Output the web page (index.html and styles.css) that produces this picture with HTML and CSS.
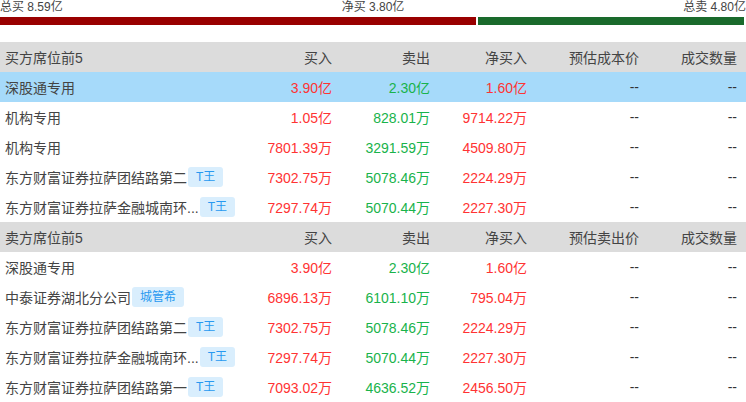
FILE: index.html
```html
<!DOCTYPE html>
<html lang="zh-CN">
<head>
<meta charset="utf-8">
<link rel="stylesheet" href="styles.css">
</head>
<body>
<div class="page">
  <div class="summary">
    <span>总买 8.59亿</span>
    <span>净买 3.80亿</span>
    <span>总卖 4.80亿</span>
  </div>
  <div class="bar">
    <div class="bar-buy"></div>
    <div class="bar-sell"></div>
  </div>

  <div class="table">
    <div class="row head">
      <div class="c name">买方席位前5</div><div class="c">买入</div><div class="c">卖出</div><div class="c">净买入</div><div class="c">预估成本价</div><div class="c">成交数量</div>
    </div>
    <div class="row hl">
      <div class="c name"><span class="nm">深股通专用</span></div><div class="c up">3.90亿</div><div class="c down">2.30亿</div><div class="c up">1.60亿</div><div class="c">--</div><div class="c">--</div>
    </div>
    <div class="row">
      <div class="c name"><span class="nm">机构专用</span></div><div class="c up">1.05亿</div><div class="c down">828.01万</div><div class="c up">9714.22万</div><div class="c">--</div><div class="c">--</div>
    </div>
    <div class="row">
      <div class="c name"><span class="nm">机构专用</span></div><div class="c up">7801.39万</div><div class="c down">3291.59万</div><div class="c up">4509.80万</div><div class="c">--</div><div class="c">--</div>
    </div>
    <div class="row">
      <div class="c name"><span class="nm">东方财富证券拉萨团结路第二</span><span class="tag">T王</span></div><div class="c up">7302.75万</div><div class="c down">5078.46万</div><div class="c up">2224.29万</div><div class="c">--</div><div class="c">--</div>
    </div>
    <div class="row">
      <div class="c name"><span class="nm" title="东方财富证券拉萨金融城南环路">东方财富证券拉萨金融城南环...</span><span class="tag">T王</span></div><div class="c up">7297.74万</div><div class="c down">5070.44万</div><div class="c up">2227.30万</div><div class="c">--</div><div class="c">--</div>
    </div>

    <div class="row head">
      <div class="c name">卖方席位前5</div><div class="c">买入</div><div class="c">卖出</div><div class="c">净买入</div><div class="c">预估卖出价</div><div class="c">成交数量</div>
    </div>
    <div class="row">
      <div class="c name"><span class="nm">深股通专用</span></div><div class="c up">3.90亿</div><div class="c down">2.30亿</div><div class="c up">1.60亿</div><div class="c">--</div><div class="c">--</div>
    </div>
    <div class="row">
      <div class="c name"><span class="nm">中泰证券湖北分公司</span><span class="tag">城管希</span></div><div class="c up">6896.13万</div><div class="c down">6101.10万</div><div class="c up">795.04万</div><div class="c">--</div><div class="c">--</div>
    </div>
    <div class="row">
      <div class="c name"><span class="nm">东方财富证券拉萨团结路第二</span><span class="tag">T王</span></div><div class="c up">7302.75万</div><div class="c down">5078.46万</div><div class="c up">2224.29万</div><div class="c">--</div><div class="c">--</div>
    </div>
    <div class="row">
      <div class="c name"><span class="nm" title="东方财富证券拉萨金融城南环路">东方财富证券拉萨金融城南环...</span><span class="tag">T王</span></div><div class="c up">7297.74万</div><div class="c down">5070.44万</div><div class="c up">2227.30万</div><div class="c">--</div><div class="c">--</div>
    </div>
    <div class="row">
      <div class="c name"><span class="nm">东方财富证券拉萨团结路第一</span><span class="tag">T王</span></div><div class="c up">7093.02万</div><div class="c down">4636.52万</div><div class="c up">2456.50万</div><div class="c">--</div><div class="c">--</div>
    </div>
  </div>
</div>
</body>
</html>
```

FILE: styles.css
```css
* { box-sizing: border-box; }
html, body {
  margin: 0;
  padding: 0;
  background: #ffffff;
}
body {
  font-family: "Liberation Sans", "Noto Sans CJK SC", sans-serif;
  color: #333333;
  width: 746px;
  height: 402px;
  overflow: hidden;
}
.page {
  display: flex;
  flex-direction: column;
}
.summary {
  display: flex;
  justify-content: space-between;
  font-size: 12px;
  line-height: 15px;
  height: 17px;
  color: #444444;
}
.bar {
  display: flex;
  height: 8px;
  gap: 2px;
  width: 744px;
}
.bar-buy {
  width: 476px;
  background: #990000;
}
.bar-sell {
  flex: 1;
  background: #1a6a2c;
}
.table {
  margin-top: 17px;
  display: flex;
  flex-direction: column;
}
.row {
  display: grid;
  grid-template-columns: 243px 98px 98px 97px 112px 98px;
  height: 30px;
  align-items: center;
  font-size: 14px;
}
.row.head {
  background: #dcdcdc;
  color: #444444;
}
.row.hl {
  background: #a6dafa;
}
.c {
  text-align: right;
  padding-right: 9px;
  white-space: nowrap;
}
.c.name {
  text-align: left;
  padding-left: 5px;
  padding-right: 0;
  display: flex;
  align-items: center;
  color: #444444;
}
.nm {
  white-space: nowrap;
}
.tag {
  margin-left: 1px;
  background: #d9eefd;
  color: #2799f0;
  font-size: 12px;
  height: 20px;
  line-height: 20px;
  padding: 0 8px;
  border-radius: 3px;
}
.up { color: #ff3333; }
.down { color: #19b34b; }
```
